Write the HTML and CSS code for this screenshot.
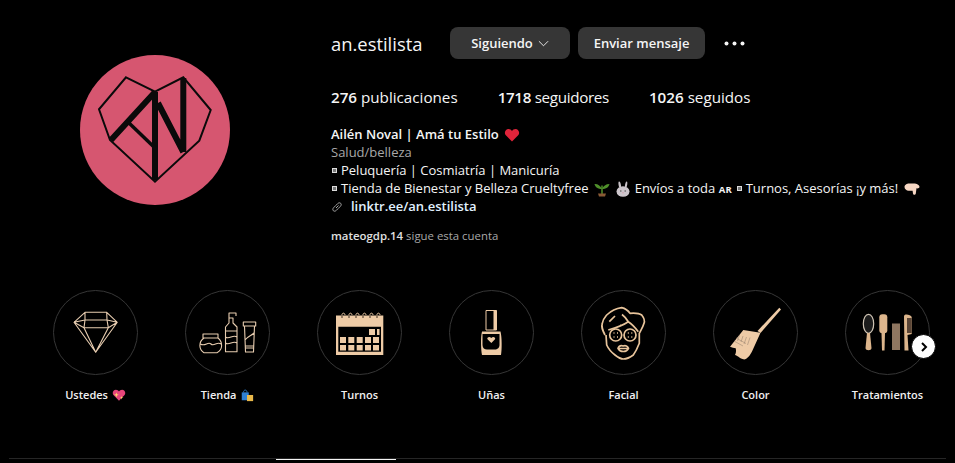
FILE: index.html
```html
<!DOCTYPE html>
<html lang="es">
<head>
<meta charset="utf-8">
<title>an.estilista</title>
<link rel="stylesheet" href="styles.css">
</head>
<body>
<main class="page">
  <header class="profile">
    <div class="avatar">
      <svg viewBox="0 0 150 150" width="150" height="150">
        <circle cx="75" cy="75" r="75" fill="#d65670"/>
        <path class="logo-thin" d="M46 22.300 75 36.700 103.300 22.300 130.700 55 119.300 85.700 75 126.700 30 85 19 54.300Z"/>
        <path class="logo-thick" d="M31 85 75 37M75 37V125M78 48 103.300 97M103.300 23V97"/>
        <path class="logo-mid" d="M48 67 75 93"/>
      </svg>
    </div>
    <section class="info">
      <div class="title-row">
        <h1 class="username">an.estilista</h1>
        <button class="btn btn-follow">Siguiendo
          <svg class="chev" viewBox="0 0 12 12" width="11" height="11"><path d="M1 3.500 6 8.500 11 3.500"/></svg>
        </button>
        <button class="btn btn-msg">Enviar mensaje</button>
        <svg class="more" viewBox="0 0 21 5" width="21" height="5"><circle cx="2.500" cy="2.500" r="2"/><circle cx="10.500" cy="2.500" r="2"/><circle cx="18.500" cy="2.500" r="2"/></svg>
      </div>
      <ul class="stats">
        <li><b>276</b> publicaciones</li>
        <li class="tight"><b>1718</b> seguidores</li>
        <li><b>1026</b> seguidos</li>
      </ul>
      <div class="bio">
        <div class="row bio-name">Ailén Noval | Amá tu Estilo <svg class="emoji" viewBox="0 0 16 16"><path fill="#e0243a" d="M8 14.500 1.600 8C-.2 5.600 1.500 2 4.500 2 6 2 7.300 2.800 8 4 8.700 2.800 10 2 11.500 2 14.500 2 16.200 5.600 14.400 8Z"/></svg></div>
        <div class="row bio-cat">Salud/belleza</div>
        <div class="row"><span class="sq"></span>Peluquería | Cosmiatría | Manicuría</div>
        <div class="row"><span class="sq"></span>Tienda de Bienestar y Belleza Crueltyfree <svg class="emoji" viewBox="0 0 16 16"><path fill="#4f8f2a" d="M8 8C6 4 3 2.500 .5 3 1 6 4 8 8 8ZM8 8C9 5 12 3 15.500 3 15 6 12 8 8 8Z"/><path stroke="#4f8f2a" stroke-width="1.500" d="M8 4.500V13"/><path fill="#8a5a35" d="M4 12.500H12L11 15.500H5Z"/></svg> <svg class="emoji" viewBox="0 0 16 16"><path fill="#c9c2c8" d="M4 .5C5.200 0 6 3 6.200 6L4.300 6.500C3.500 4.500 3 1 4 .5ZM11.800 .5C12.800 1 12.300 4.500 11.500 6.500L9.800 6C10 3 10.800 0 11.800 .5Z"/><ellipse cx="8" cy="10.500" rx="6.500" ry="5.300" fill="#cdc6cc"/><circle cx="5.800" cy="10" r=".8" fill="#555"/><circle cx="10.200" cy="10" r=".8" fill="#555"/><path fill="#d88ea0" d="M7 11.500H9L8 12.500Z"/></svg> Envíos a toda <span class="ar">AR</span> <span class="sq"></span>Turnos, Asesorías ¡y más! <svg class="emoji" viewBox="0 0 16 16"><path fill="#f7d7c4" d="M.5 6C.5 4 3 2.500 5 2.500H10C12.500 2.500 15.500 4 15.500 5.800 15.500 7 14 7.600 12.500 7.300L11.800 12.500C11.500 14.200 9.200 14.200 9 12.500L8.600 9.700H4.500C2.500 9.700 .5 8 .5 6Z"/></svg></div>
        <a class="row bio-link"><svg class="link-ico" viewBox="0 0 12 12"><path d="M5 7 7.500 4.500M4.600 4.700 2.600 6.700C.5 9 3.100 11.500 5.300 9.400L7.300 7.400M7.400 7.300 9.400 5.300C11.500 3.100 9 .5 6.700 2.600L4.700 4.600"/></svg><b>linktr.ee/an.estilista</b></a>
      </div>
      <p class="followed"><b>mateogdp.14</b> sigue esta cuenta</p>
    </section>
  </header>

  <section class="stories">
    <article class="story">
      <div class="ring">
        <svg viewBox="0 0 85 85" class="line-ico">
          <path d="M32 22.300H53.700L64.300 32.300 42.700 62.300 21 32.300ZM21 32.300 32 30H54L64.300 32.300M32 22.300 32 30M53.700 22.300 54 30M32 30 31 37.700M54 30 55.300 37.700M21 32.300 31 37.700 42.700 62.300 55.300 37.700 64.300 32.300M31 37.700H55.300"/>
        </svg>
      </div>
      <span class="label">Ustedes <svg class="emoji-s" viewBox="0 0 16 16"><path fill="#e8457a" d="M8 14.500 1.600 8C-.2 5.600 1.500 2 4.500 2 6 2 7.300 2.800 8 4 8.700 2.800 10 2 11.500 2 14.500 2 16.200 5.600 14.400 8Z"/><path fill="#ffd36b" d="M5 5 5.800 7 7.800 7.800 5.800 8.600 5 10.600 4.200 8.600 2.200 7.800 4.200 7ZM11 9 11.500 10.500 13 11 11.500 11.500 11 13 10.500 11.500 9 11 10.500 10.500Z"/></svg></span>
    </article>
    <article class="story">
      <div class="ring">
        <svg viewBox="0 0 85 85" class="line-ico">
          <path d="M18 44H33V48H18ZM19 48C13 52 14 60 19 62.700H32C38 60 38 52 33 48M15.500 54C20 57 23 51 26 54 29 57 32 51 36 54"/>
          <path d="M40.500 37 44 33V28H48V33L52 37V61.700H40.500ZM44 28V23H51V26M40.500 41H52M40.500 47C44 50 48 44 52 47M40.500 53C44 56 48 50 52 53"/>
          <path d="M58.300 32H70.700V36H58.300ZM59.500 36H69.500L68.500 62H60.500ZM60 50C63 46 66 46 69 43M60 56H69M60 58H68.500"/>
        </svg>
      </div>
      <span class="label">Tienda <svg class="emoji-s" viewBox="0 0 16 16"><path fill="#2f7fd1" d="M2 5H10V14H2Z"/><path fill="#e9b84a" d="M8 8H15V15H8Z"/><path fill="none" stroke="#2f7fd1" stroke-width="1" d="M4 5C4 1.500 8 1.500 8 5"/></svg></span>
    </article>
    <article class="story">
      <div class="ring">
        <svg viewBox="0 0 85 85" class="fill-ico">
          <path fill-rule="evenodd" d="M19 25.500H66.300V65H19ZM21.300 36.700V61.700H64V36.700Z"/>
          <path d="M52 39H58V45H52ZM60 39H62.500V45H60ZM23 47H29V53H23ZM31.300 47H37.300V53H31.300ZM39.700 47H45.700V53H39.700ZM48 47H54V53H48ZM56 47H62V53H56ZM23 55H29V60.500H23ZM31.300 55H37.300V60.500H31.300ZM39.700 55H45.700V60.500H39.700ZM48 55H54V60.500H48ZM56 55H62V60.500H56Z"/>
          <path class="spiral" d="M25 25.500C24.500 22.500 28 22.500 28 25M32 25.500C31.500 22.500 35 22.500 35 25M39 25.500C38.500 22.500 42 22.500 42 25M46 25.500C45.500 22.500 49 22.500 49 25M53 25.500C52.500 22.500 56 22.500 56 25M60 25.500C59.500 22.500 63 22.500 63 25"/>
          <path class="ticks" d="M25 25.500V28M32 25.500V28M39 25.500V28M46 25.500V28M53 25.500V28M60 25.500V28"/>
        </svg>
      </div>
      <span class="label">Turnos</span>
    </article>
    <article class="story">
      <div class="ring">
        <svg viewBox="0 0 85 85" class="fill-ico">
          <path class="outline" d="M37 20.500H47.500V40H37Z"/>
          <path d="M44.500 20.500H47.500V40H44.500ZM33 41.500H51.500C53 47 53 60 52 65H33C32 60 31.500 47 33 41.500Z"/>
          <path fill="#000" d="M33.500 44H50.500V55C50.500 58 48 59.500 46 59.500H38C35.500 59.500 33.500 58 33.500 55Z"/>
          <path d="M42.300 53 38.500 49.200C37.500 47.500 40.500 46 42.300 48 44 46 47 47.500 46 49.200Z"/>
        </svg>
      </div>
      <span class="label">Uñas</span>
    </article>
    <article class="story">
      <div class="ring">
        <svg viewBox="0 0 85 85" class="line-ico heavy">
          <path d="M24 45C21.500 40 20 37 21.300 33.300 22 29 24 27 25.700 25 30 21 35 18.500 40.700 17.700 44 18.500 47 20.500 49 23.300 53 23 58 23 60.700 25 63 28 64 31 63 33.300 62 37 60 40 58.300 43.300V53.300C56.500 58 54.500 62 52.300 65 49 67.500 46 69 42.300 69 39 69 36.500 67 34 65 30 62 27.500 59 25.700 55L25 45"/>
          <path d="M27.300 40C34 38 41 36 47.300 31.700 51 34 54.500 38 57.300 41.700M47.300 31.700C45 28 43 26 41 24.500"/>
          <circle cx="34.700" cy="45" r="6"/><circle cx="49" cy="45" r="6"/>
          <path d="M28.300 31.700 34 26M39 35H39.500"/>
          <path class="thin" d="M32.500 43H33.500M36 43H37M32.500 47H33.500M36 47H37M46.800 43H47.800M50.300 43H51.300M46.800 47H47.800M50.300 47H51.300"/>
          <path d="M42.300 56C40 55 38 56 37 58.300 38 60.500 40 61.500 42.300 61.500 44.500 61.500 46.500 60.500 47.500 58.300 46.500 56 44.500 55 42.300 56ZM37.500 58.500H47"/>
        </svg>
      </div>
      <span class="label">Facial</span>
    </article>
    <article class="story">
      <div class="ring">
        <svg viewBox="0 0 85 85" class="fill-ico">
          <path d="M66.300 17.800 68 19.500 47.500 43 44.500 41Z"/>
          <path d="M30.300 40 47.500 42.700 39.700 60C37 66 33.500 70 30.300 69.300 26 68 24.500 65.500 22 65 23.500 62 23 60 22.700 58.300 21 58 19 57.500 17 56.700Z"/>
          <path class="cut" d="M23 48 33 53.500M21 51 30 56M26.500 45 24.500 51M30 46 28 52M33.500 47 31 54M37 47.500 34.500 55"/>
        </svg>
      </div>
      <span class="label">Color</span>
    </article>
    <article class="story">
      <div class="ring">
        <svg viewBox="0 0 85 85" class="tools">
          <ellipse cx="23.500" cy="33.800" rx="5.200" ry="9.500" fill="#1c1c1c" stroke="#cfc4b4" stroke-width="1.200"/>
          <path class="tan" d="M22 43H25L26.500 58C26.500 61 20.500 61 20.500 58Z"/>
          <rect class="tan" x="34.300" y="24.300" width="8" height="19" rx="3"/>
          <path class="tan" d="M36.500 43H40L39.500 60.500H37Z"/>
          <rect class="comb" x="47" y="33.500" width="8" height="26.500"/>
          <path class="tan" d="M59 26.500C59 23 66 25 66.700 27V44L62.500 45 63.500 60.500H59.500Z"/>
          <path class="dark" d="M62 28H66.700V43H62Z"/>
        </svg>
      </div>
      <span class="label">Tratamientos</span>
    </article>
    <button class="next" aria-label="Siguiente">
      <svg viewBox="0 0 10 10" width="10" height="10"><path d="M3 1 7 5 3 9"/></svg>
    </button>
  </section>

  <nav class="tabs"><span class="tab-active"></span></nav>
</main>
</body>
</html>
```
FILE: styles.css
```css
* { box-sizing: border-box; }
html, body { margin: 0; padding: 0; background: #000; }
body {
  width: 955px;
  height: 463px;
  overflow: hidden;
  color: #f5f5f5;
  font-family: "Open Sans", "Noto Sans", sans-serif;
}
.page { display: flex; flex-direction: column; height: 463px; }

.profile { display: flex; padding: 27px 0 0 80px; height: 290px; }
.avatar { width: 150px; height: 150px; margin-top: 28px; flex: none; }
.avatar svg { display: block; }
.logo-thin, .logo-thick, .logo-mid { fill: none; stroke: #0a0a0a; stroke-linejoin: miter; }
.logo-thin { stroke-width: 2; }
.logo-thick { stroke-width: 6; }
.logo-mid { stroke-width: 3.5; }

.info { margin-left: 101px; width: 620px; }
.title-row { display: flex; align-items: center; height: 32px; }
.username { margin: 0; width: 119px; font-size: 18.400px; font-weight: 400; }
.btn {
  display: flex;
  align-items: center;
  justify-content: center;
  height: 32px;
  padding: 0;
  border: 0;
  border-radius: 8px;
  background: #363636;
  color: #f5f5f5;
  font: 600 13px "Open Sans", "Noto Sans", sans-serif;
}
.btn-follow { width: 120px; gap: 5px; }
.btn-msg { width: 127px; margin-left: 8px; }
.chev { fill: none; stroke: #f5f5f5; stroke-width: 1; }
.more { margin-left: 19px; fill: #f5f5f5; }

.stats { display: flex; margin: 24px 0 0; padding: 0; list-style: none; font-size: 15.200px; line-height: 28px; }
.stats li { margin-right: 40px; }
.stats .tight { letter-spacing: -.33px; }
.stats b { font-weight: 600; }

.bio { margin-top: 14px; font-size: 13px; width: 620px; }
.row { display: block; height: 18px; line-height: 18px; white-space: nowrap; }
.bio-name { font-weight: 600; }
.bio-cat { color: #a8a8a8; }
.sq { display: inline-block; width: 5px; height: 5px; margin: 0 4px 2px 1px; border: 1px solid #dcdcdc; background: #777; }
.ar { font-size: 9.500px; font-weight: 700; letter-spacing: .4px; }
.emoji { width: 16px; height: 16px; vertical-align: -4px; margin-left: 2px; }
.emoji-s { width: 14px; height: 14px; vertical-align: -3px; margin-left: 1px; }
.bio-link { color: #e0f1ff; }
.bio-link b { font-weight: 600; }
.link-ico { width: 12px; height: 12px; margin-right: 8px; vertical-align: -2px; fill: none; stroke: #a8a8a8; stroke-width: 1; }

.followed { margin: 13px 0 0; font-size: 11.400px; line-height: 16px; color: #a8a8a8; }
.followed b { color: #e0e0e0; font-weight: 600; }

.stories { position: relative; display: flex; gap: 47px; padding-left: 53px; height: 168px; }
.story { width: 85px; flex: none; display: flex; flex-direction: column; align-items: center; }
.ring { width: 85px; height: 85px; border-radius: 50%; border: 1px solid #363636; background: #000; flex: none; position: relative; }
.ring svg { position: absolute; inset: -1px; width: 85px; height: 85px; }
.label { margin-top: 11px; font-size: 11px; line-height: 17px; font-weight: 600; white-space: nowrap; color: #f0f0f0; }
.line-ico { fill: none; stroke: #e8cdb0; stroke-width: 1.100; stroke-linejoin: round; }
.line-ico.heavy { stroke-width: 1.700; stroke: #e8c49b; }
.line-ico .thin { stroke-width: 1.300; }
.fill-ico { fill: #eecba6; }
.fill-ico .spiral { fill: none; stroke: #eecba6; stroke-width: 1; }
.fill-ico .ticks { fill: none; stroke: #3a2c20; stroke-width: 1; }
.fill-ico .outline { fill: none; stroke: #eecba6; stroke-width: 1; }
.fill-ico .cut { fill: none; stroke: #a08a74; stroke-width: .6; }
.tools .tan { fill: #dcb58c; }
.tools .dark { fill: #5a4536; }
.tools .comb { fill: #8f7660; }
.next {
  position: absolute;
  left: 911px;
  top: 44px;
  width: 25px;
  height: 25px;
  padding: 0;
  display: flex;
  align-items: center;
  justify-content: center;
  border: 1px solid #000;
  border-radius: 50%;
  background: #fff;
}
.next svg { fill: none; stroke: #000; stroke-width: 2; }

.tabs { position: relative; margin: 0 9px; height: 1px; background: #262626; flex: none; }
.tab-active { position: absolute; left: 267px; top: 1px; width: 120px; height: 1px; background: #f5f5f5; }
```
